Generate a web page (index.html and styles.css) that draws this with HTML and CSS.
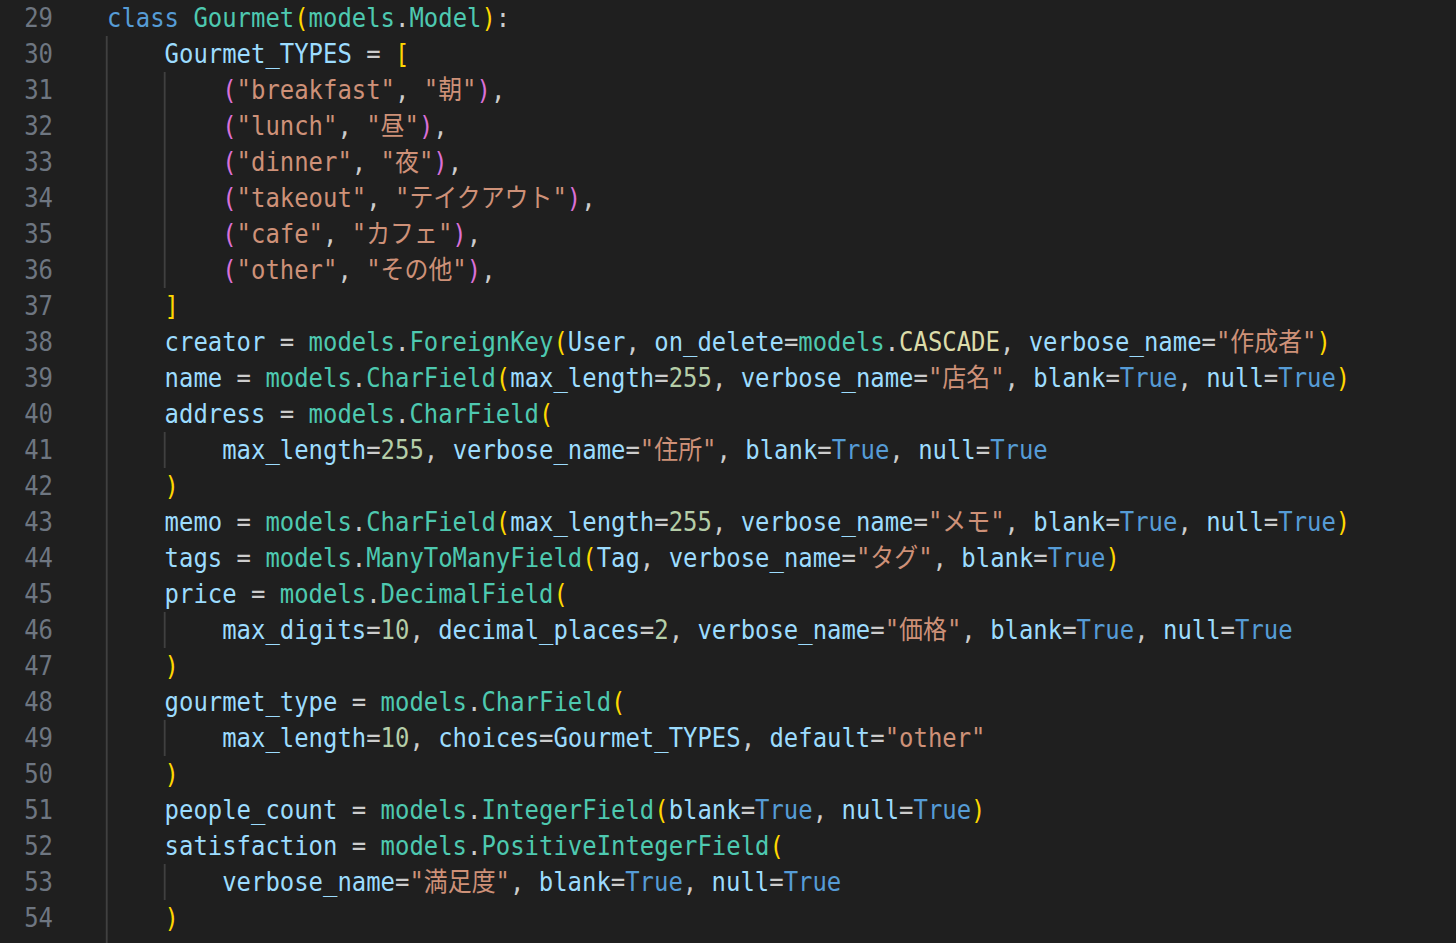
FILE: index.html
```html
<!DOCTYPE html>
<html lang="ja">
<head>
    <meta charset="UTF-8">
    <meta name="viewport" content="width=device-width, initial-scale=1.0">
    <title>models.py</title>
    <link rel="stylesheet" href="styles.css">
</head>
<body>
    <div class="editor">
        <!-- line 29 -->
        <div class="row"><span class="ln">29</span><span class="src"><span class="kw">class</span> <span class="cls">Gourmet</span><span class="b1">(</span><span class="cls">models</span>.<span class="cls">Model</span><span class="b1">)</span>:</span></div>
        <div class="row"><span class="ln">30</span><span class="src"><span class="ind g"></span><span class="var">Gourmet_TYPES</span> = <span class="b1">[</span></span></div>
        <div class="row"><span class="ln">31</span><span class="src"><span class="ind g"></span><span class="ind g"></span><span class="b2">(</span><span class="str">"breakfast"</span>, <span class="str">"朝"</span><span class="b2">)</span>,</span></div>
        <div class="row"><span class="ln">32</span><span class="src"><span class="ind g"></span><span class="ind g"></span><span class="b2">(</span><span class="str">"lunch"</span>, <span class="str">"昼"</span><span class="b2">)</span>,</span></div>
        <div class="row"><span class="ln">33</span><span class="src"><span class="ind g"></span><span class="ind g"></span><span class="b2">(</span><span class="str">"dinner"</span>, <span class="str">"夜"</span><span class="b2">)</span>,</span></div>
        <div class="row"><span class="ln">34</span><span class="src"><span class="ind g"></span><span class="ind g"></span><span class="b2">(</span><span class="str">"takeout"</span>, <span class="str">"テイクアウト"</span><span class="b2">)</span>,</span></div>
        <div class="row"><span class="ln">35</span><span class="src"><span class="ind g"></span><span class="ind g"></span><span class="b2">(</span><span class="str">"cafe"</span>, <span class="str">"カフェ"</span><span class="b2">)</span>,</span></div>
        <div class="row"><span class="ln">36</span><span class="src"><span class="ind g"></span><span class="ind g"></span><span class="b2">(</span><span class="str">"other"</span>, <span class="str">"その他"</span><span class="b2">)</span>,</span></div>
        <div class="row"><span class="ln">37</span><span class="src"><span class="ind g"></span><span class="b1">]</span></span></div>
        <div class="row"><span class="ln">38</span><span class="src"><span class="ind g"></span><span class="var">creator</span> = <span class="cls">models</span>.<span class="cls">ForeignKey</span><span class="b1">(</span><span class="var">User</span>, <span class="var">on_delete</span>=<span class="cls">models</span>.<span class="const">CASCADE</span>, <span class="var">verbose_name</span>=<span class="str">"作成者"</span><span class="b1">)</span></span></div>
        <div class="row"><span class="ln">39</span><span class="src"><span class="ind g"></span><span class="var">name</span> = <span class="cls">models</span>.<span class="cls">CharField</span><span class="b1">(</span><span class="var">max_length</span>=<span class="num">255</span>, <span class="var">verbose_name</span>=<span class="str">"店名"</span>, <span class="var">blank</span>=<span class="kw">True</span>, <span class="var">null</span>=<span class="kw">True</span><span class="b1">)</span></span></div>
        <div class="row"><span class="ln">40</span><span class="src"><span class="ind g"></span><span class="var">address</span> = <span class="cls">models</span>.<span class="cls">CharField</span><span class="b1">(</span></span></div>
        <div class="row"><span class="ln">41</span><span class="src"><span class="ind g"></span><span class="ind g"></span><span class="var">max_length</span>=<span class="num">255</span>, <span class="var">verbose_name</span>=<span class="str">"住所"</span>, <span class="var">blank</span>=<span class="kw">True</span>, <span class="var">null</span>=<span class="kw">True</span></span></div>
        <div class="row"><span class="ln">42</span><span class="src"><span class="ind g"></span><span class="b1">)</span></span></div>
        <div class="row"><span class="ln">43</span><span class="src"><span class="ind g"></span><span class="var">memo</span> = <span class="cls">models</span>.<span class="cls">CharField</span><span class="b1">(</span><span class="var">max_length</span>=<span class="num">255</span>, <span class="var">verbose_name</span>=<span class="str">"メモ"</span>, <span class="var">blank</span>=<span class="kw">True</span>, <span class="var">null</span>=<span class="kw">True</span><span class="b1">)</span></span></div>
        <div class="row"><span class="ln">44</span><span class="src"><span class="ind g"></span><span class="var">tags</span> = <span class="cls">models</span>.<span class="cls">ManyToManyField</span><span class="b1">(</span><span class="var">Tag</span>, <span class="var">verbose_name</span>=<span class="str">"タグ"</span>, <span class="var">blank</span>=<span class="kw">True</span><span class="b1">)</span></span></div>
        <div class="row"><span class="ln">45</span><span class="src"><span class="ind g"></span><span class="var">price</span> = <span class="cls">models</span>.<span class="cls">DecimalField</span><span class="b1">(</span></span></div>
        <div class="row"><span class="ln">46</span><span class="src"><span class="ind g"></span><span class="ind g"></span><span class="var">max_digits</span>=<span class="num">10</span>, <span class="var">decimal_places</span>=<span class="num">2</span>, <span class="var">verbose_name</span>=<span class="str">"価格"</span>, <span class="var">blank</span>=<span class="kw">True</span>, <span class="var">null</span>=<span class="kw">True</span></span></div>
        <div class="row"><span class="ln">47</span><span class="src"><span class="ind g"></span><span class="b1">)</span></span></div>
        <div class="row"><span class="ln">48</span><span class="src"><span class="ind g"></span><span class="var">gourmet_type</span> = <span class="cls">models</span>.<span class="cls">CharField</span><span class="b1">(</span></span></div>
        <div class="row"><span class="ln">49</span><span class="src"><span class="ind g"></span><span class="ind g"></span><span class="var">max_length</span>=<span class="num">10</span>, <span class="var">choices</span>=<span class="var">Gourmet_TYPES</span>, <span class="var">default</span>=<span class="str">"other"</span></span></div>
        <div class="row"><span class="ln">50</span><span class="src"><span class="ind g"></span><span class="b1">)</span></span></div>
        <div class="row"><span class="ln">51</span><span class="src"><span class="ind g"></span><span class="var">people_count</span> = <span class="cls">models</span>.<span class="cls">IntegerField</span><span class="b1">(</span><span class="var">blank</span>=<span class="kw">True</span>, <span class="var">null</span>=<span class="kw">True</span><span class="b1">)</span></span></div>
        <div class="row"><span class="ln">52</span><span class="src"><span class="ind g"></span><span class="var">satisfaction</span> = <span class="cls">models</span>.<span class="cls">PositiveIntegerField</span><span class="b1">(</span></span></div>
        <div class="row"><span class="ln">53</span><span class="src"><span class="ind g"></span><span class="ind g"></span><span class="var">verbose_name</span>=<span class="str">"満足度"</span>, <span class="var">blank</span>=<span class="kw">True</span>, <span class="var">null</span>=<span class="kw">True</span></span></div>
        <div class="row"><span class="ln">54</span><span class="src"><span class="ind g"></span><span class="b1">)</span></span></div>
        <!-- cut off by the window -->
        <div class="row"><span class="ln">55</span><span class="src"><span class="ind g"></span><span class="var">updated</span> = <span class="cls">models</span>.<span class="cls">DateTimeField</span><span class="b1">(</span><span class="var">auto_now</span>=<span class="kw">True</span><span class="b1">)</span></span></div>
    </div>
</body>
</html>
```

FILE: styles.css
```css
html, body {
    margin: 0;
    height: 100%;
    overflow: hidden;
    background-color: #1f1f1f;
}
.editor {
    font-family: "DejaVu Sans Mono", "Noto Sans CJK JP", monospace;
    font-size: 26px;
    line-height: 36px;
    color: #cccccc;
    transform: scaleX(0.92);
    transform-origin: 0 0;
}
.row {
    display: flex;
    height: 36px;
}
.ln {
    flex: none;
    width: 57.6px;
    text-align: right;
    color: #6e7681;
}
.src {
    margin-left: 58.7px;
    white-space: pre;
}
.ind {
    display: inline-block;
    width: 4ch;
    height: 36px;
    vertical-align: top;
    box-sizing: border-box;
}
.ind.g {
    border-left: 2px solid #404040;
    margin-left: -1px;
    margin-right: 1px;
}
.kw {
    color: #569cd6;
}
.cls {
    color: #4ec9b0;
}
.var {
    color: #9cdcfe;
}
.str {
    color: #ce9178;
}
.num {
    color: #b5cea8;
}
.const {
    color: #dcdcaa;
}
.b1 {
    color: #ffd700;
}
.b2 {
    color: #da70d6;
}
```
